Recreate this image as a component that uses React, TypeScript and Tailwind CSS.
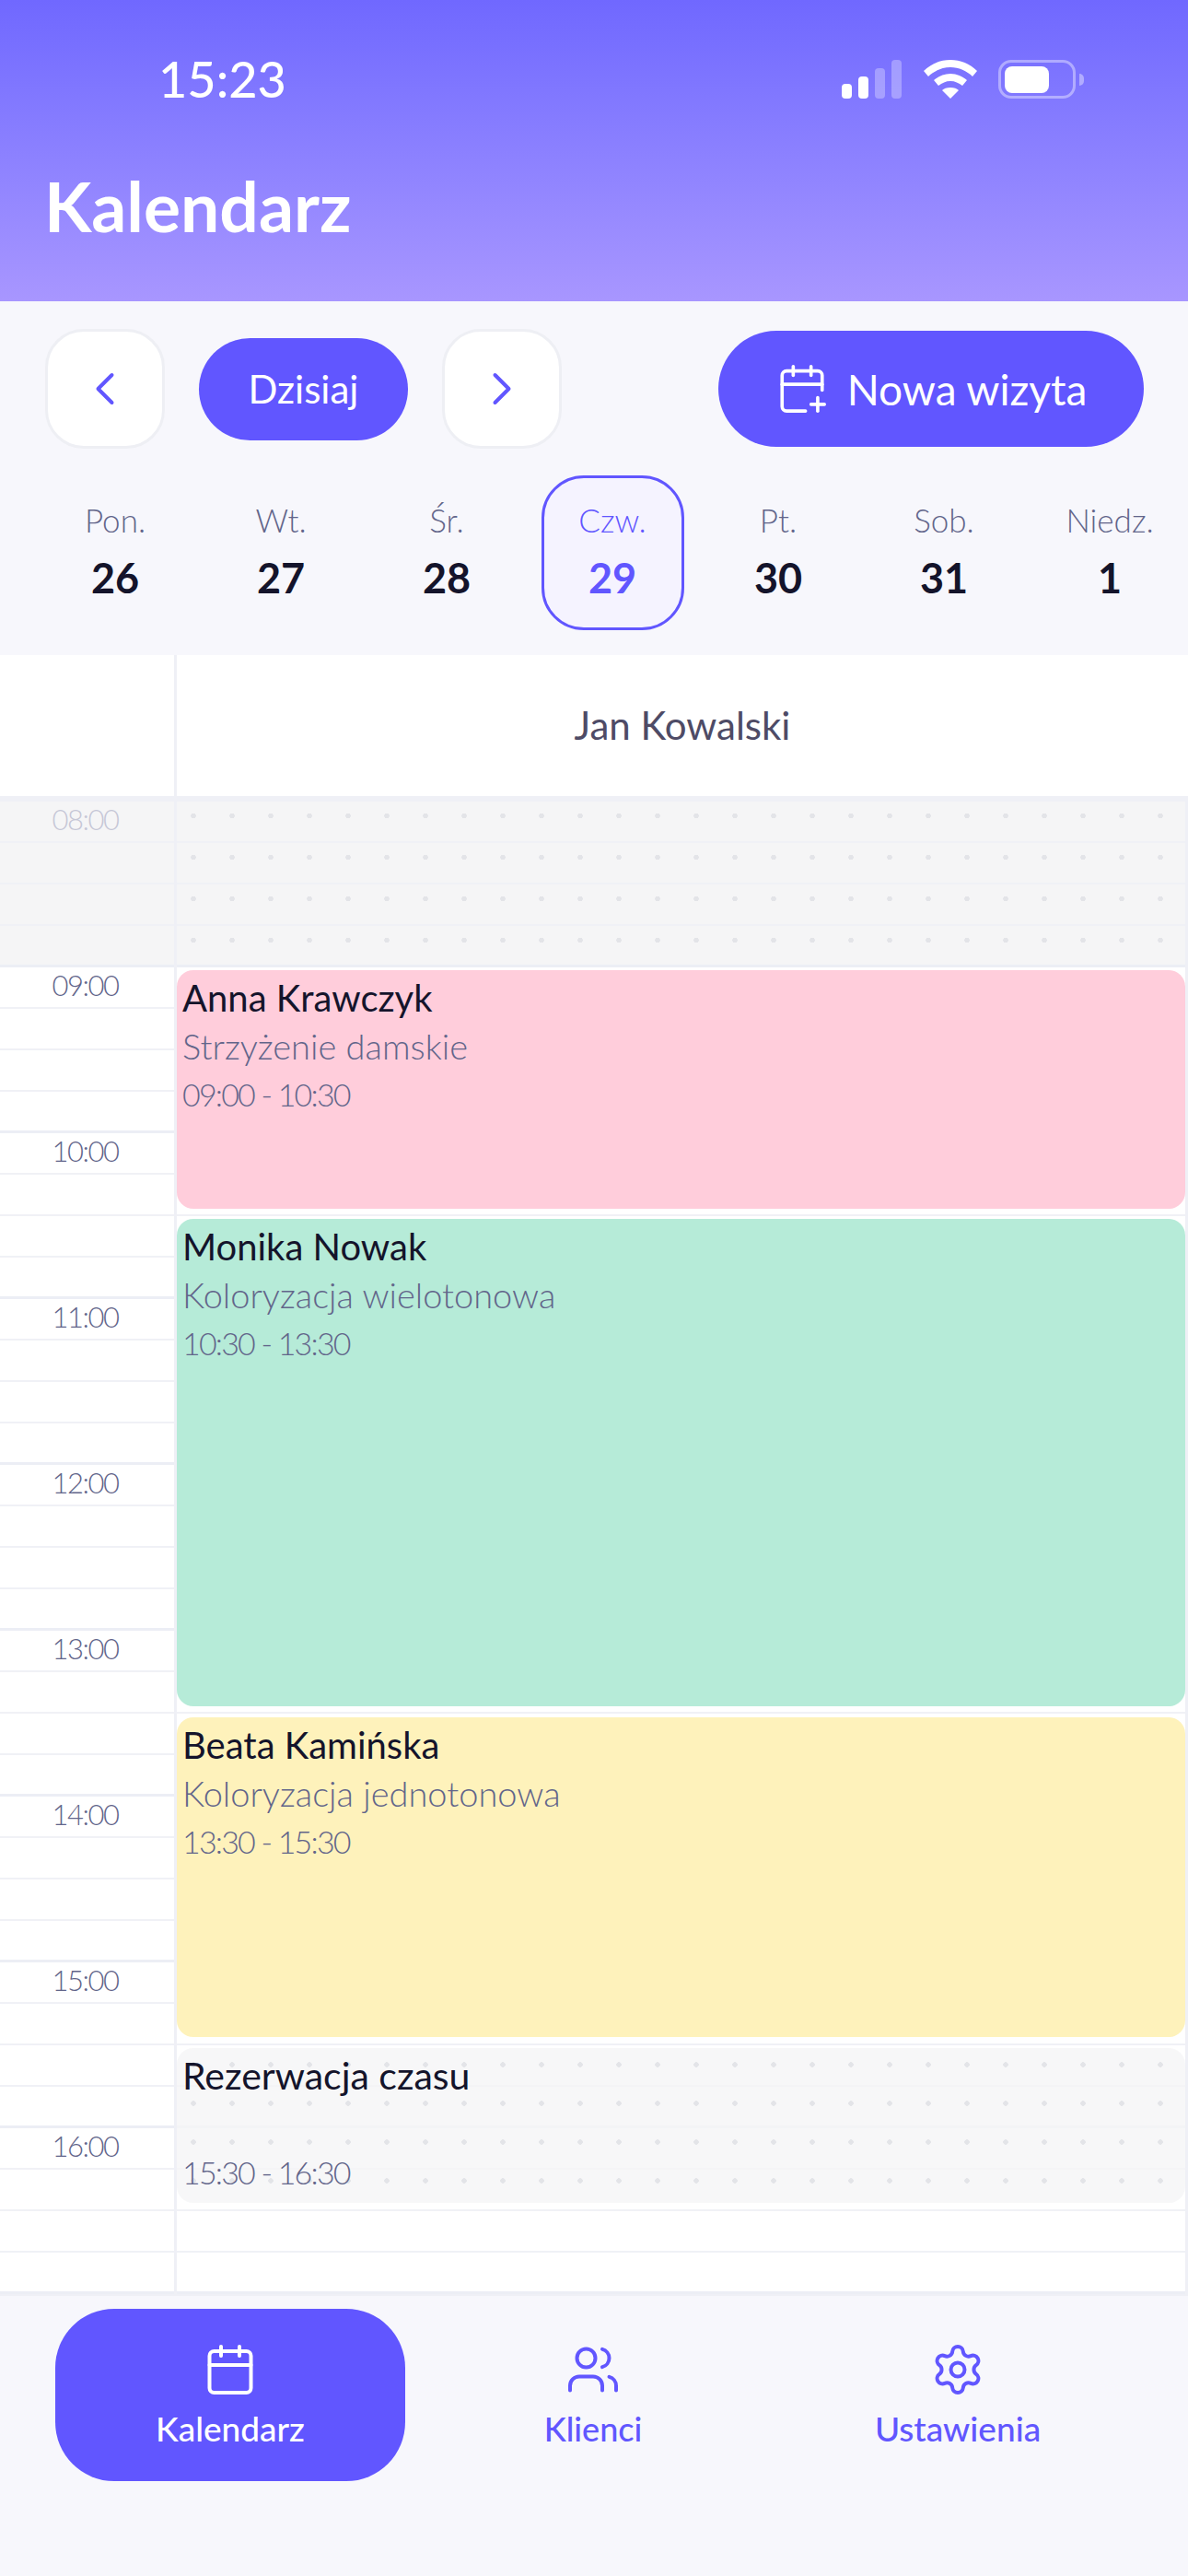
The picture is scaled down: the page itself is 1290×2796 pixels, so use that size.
import { CalendarPlus, Calendar, ChevronLeft, ChevronRight, Settings, Users } from "lucide-react"

const days = [
  ["Pon.", "26"],
  ["Wt.", "27"],
  ["Śr.", "28"],
  ["Czw.", "29"],
  ["Pt.", "30"],
  ["Sob.", "31"],
  ["Niedz.", "1"],
]

const hours = ["08:00", "09:00", "10:00", "11:00", "12:00", "13:00", "14:00", "15:00", "16:00"]

const dots =
  "bg-[radial-gradient(circle,#e3e4e8_2.5px,transparent_3px)] bg-[length:42px_45px] bg-[position:-3px_-7px]"

function StatusBar() {
  return (
    <div className="flex items-center justify-between pl-[172px] pr-[113px] pt-[65px]">
      <span className="text-[54px] font-medium leading-[42px] text-white">15:23</span>
      <div className="flex items-end gap-[23px]">
        <svg width="66" height="42" viewBox="0 0 66 42" fill="currentColor" className="text-white">
          <rect x="0" y="26" width="11" height="16" rx="4" />
          <rect x="18" y="18" width="11" height="24" rx="4" />
          <rect x="36" y="9" width="11" height="33" rx="4" opacity=".3" />
          <rect x="54" y="0" width="11" height="42" rx="4" opacity=".3" />
        </svg>
        <svg width="58" height="42" viewBox="0 0 58 42" fill="white">
          <path d="M29 0c11 0 21 4 29 12l-5 6C47 12 38 8 29 8S11 12 5 18l-5-6C8 4 18 0 29 0z" />
          <path d="M29 15c7 0 13 3 18 7l-5 6c-4-3-8-5-13-5s-9 2-13 5l-5-6c5-4 11-7 18-7z" />
          <path d="M29 30c4 0 7 1 9 3l-9 9-9-9c2-2 5-3 9-3z" />
        </svg>
        <div className="flex items-center gap-[4px]">
          <div className="flex h-[42px] w-[84px] items-center rounded-[14px] border-[3px] border-white/40 p-[4px]">
            <div className="h-[29px] w-[48px] rounded-[8px] bg-white" />
          </div>
          <div className="h-[13px] w-[5px] rounded-r-full bg-white/40" />
        </div>
      </div>
    </div>
  )
}

function RoundButton({ children }: { children: React.ReactNode }) {
  return (
    <button className="flex h-[130px] w-[130px] items-center justify-center rounded-[42px] border-[3px] border-[#eeeff4] bg-white text-[#6156ff]">
      {children}
    </button>
  )
}

function Appointment({
  name,
  service,
  time,
  className,
}: {
  name: string
  service: string
  time: string
  className: string
}) {
  return (
    <div className={`absolute left-0 right-0 rounded-[18px] px-[6px] pt-[4px] ${className}`}>
      <p className="text-[40px] leading-[52px] text-[#14142b]">{name}</p>
      <p className="text-[38px] leading-[52px] font-light text-[#62658a]">{service}</p>
      <p className="text-[34px] leading-[54px] font-light tracking-[-1.8px] text-[#62658a]">{time}</p>
    </div>
  )
}

export default function App() {
  return (
    <div className="flex h-[2796px] w-[1290px] flex-col overflow-hidden bg-[#f7f7fc] font-['Lato','Liberation_Sans',sans-serif]">
      <header className="h-[327px] bg-gradient-to-b from-[#7068ff] to-[#a896ff]">
        <StatusBar />
        <h1 className="mt-[74px] pl-[48px] text-[75px] font-bold leading-[84px] text-white">Kalendarz</h1>
      </header>

      <section className="h-[384px] pt-[30px]">
        <div className="flex items-center pl-[49px] pr-[48px]">
          <RoundButton>
            <ChevronLeft size={60} strokeWidth={1.6} />
          </RoundButton>
          <button className="ml-[37px] h-[111px] w-[227px] rounded-full bg-[#6156ff] text-[42px] text-white">Dzisiaj</button>
          <div className="ml-[37px]">
            <RoundButton>
              <ChevronRight size={60} strokeWidth={1.6} />
            </RoundButton>
          </div>
          <button className="ml-auto flex h-[126px] w-[462px] items-center justify-center gap-[20px] rounded-full bg-[#6156ff] text-[46px] text-white">
            <CalendarPlus size={58} strokeWidth={1.5} />
            Nowa wizyta
          </button>
        </div>
        <div className="mt-[29px] grid grid-cols-[repeat(7,180px)] pl-[35px]">
          {days.map(([label, num]) =>
            num === "29" ? (
              <div key={num} className="flex justify-center">
                <div className="flex h-[168px] w-[155px] flex-col items-center rounded-[46px] border-[3px] border-[#6156ff] bg-[#f5f3ff] pt-[23px] text-[#6156ff]">
                  <span className="text-[35px] leading-[44px] font-light">{label}</span>
                  <span className="mt-[11px] text-[45px] leading-[60px] font-bold">{num}</span>
                </div>
              </div>
            ) : (
              <div key={num} className="flex h-[168px] flex-col items-center pt-[26px]">
                <span className="text-[35px] leading-[44px] font-light text-[#62658a]">{label}</span>
                <span className="mt-[11px] text-[45px] leading-[60px] font-bold text-[#14142b]">{num}</span>
              </div>
            ),
          )}
        </div>
      </section>

      <div className="flex h-[159px] border-b-[6px] border-[#eff0f6] bg-white">
        <div className="w-[192px] shrink-0 border-r-[3px] border-[#eff0f6]" />
        <div className="flex flex-1 items-center justify-center text-[42px] text-[#4e4b66]">Jan Kowalski</div>
      </div>

      <div className="flex h-[1622px] shrink-0 border-b-[2px] border-[#eff0f6] bg-white">
        <div className="w-[192px] shrink-0 border-r-[3px] border-[#eff0f6]">
          {hours.map((hour, i) => (
            <div key={hour} className={i === 0 ? "bg-[#f5f5f6]" : ""}>
              {[0, 1, 2, 3].map((q) => (
                <div
                  key={q}
                  className={`h-[45px] ${q === 3 ? "border-b-[3px] border-[#eceef5]" : "border-b-[2px] border-[#f0f1f6]"} pr-[4px] text-center text-[31px] leading-[38px] font-light tracking-[-1.5px] ${i === 0 ? "text-[#c6c7d6]" : "text-[#62658a]"}`}
                >
                  {q === 0 ? hour : ""}
                </div>
              ))}
            </div>
          ))}
        </div>
        <div className="relative flex-1 border-r-[3px] border-[#eff0f6]">
          {hours.map((hour, i) => (
            <div key={hour} className={i === 0 ? `bg-[#f5f5f6] ${dots}` : ""}>
              {[0, 1, 2, 3].map((q) => (
                <div key={q} className={`h-[45px] ${q === 3 ? "border-b-[3px] border-[#eceef5]" : "border-b-[2px] border-[#f0f1f6]"}`} />
              ))}
            </div>
          ))}
          <Appointment name="Anna Krawczyk" service="Strzyżenie damskie" time="09:00 - 10:30" className="top-[183px] h-[259px] bg-[#ffcddb]" />
          <Appointment name="Monika Nowak" service="Koloryzacja wielotonowa" time="10:30 - 13:30" className="top-[453px] h-[529px] bg-[#b6ebd8]" />
          <Appointment name="Beata Kamińska" service="Koloryzacja jednotonowa" time="13:30 - 15:30" className="top-[994px] h-[347px] bg-[#fef2bb]" />
          <div className="absolute left-0 right-0 top-[1353px] h-[168px] rounded-[18px] bg-[#f5f5f6]/80 bg-[radial-gradient(circle,#e3e4e8_2.5px,transparent_3px)] bg-[length:42px_42px] bg-[position:-3px_-3px] px-[6px] pt-[5px]">
            <p className="text-[41px] leading-[50px] text-[#14142b]">Rezerwacja czasu</p>
            <p className="mt-[53px] text-[34px] leading-[54px] font-light tracking-[-1.8px] text-[#62658a]">15:30 - 16:30</p>
          </div>
        </div>
      </div>

      <nav className="flex flex-1 pl-[60px] pt-[14px]">
        <div className="flex h-[187px] w-[380px] flex-col items-center rounded-[64px] bg-[#6156ff] pt-[36px] text-white">
          <Calendar size={60} strokeWidth={1.6} />
          <span className="mt-[12px] text-[37px] font-medium leading-[44px]">Kalendarz</span>
        </div>
        <div className="ml-[20px] flex h-[187px] w-[368px] flex-col items-center pt-[36px] text-[#6156ff]">
          <Users size={60} strokeWidth={1.6} />
          <span className="mt-[12px] text-[36px] font-medium leading-[44px]">Klienci</span>
        </div>
        <div className="ml-[28px] flex h-[187px] w-[368px] flex-col items-center pt-[36px] text-[#6156ff]">
          <Settings size={60} strokeWidth={1.6} />
          <span className="mt-[12px] text-[37px] font-medium leading-[44px]">Ustawienia</span>
        </div>
      </nav>
    </div>
  )
}
